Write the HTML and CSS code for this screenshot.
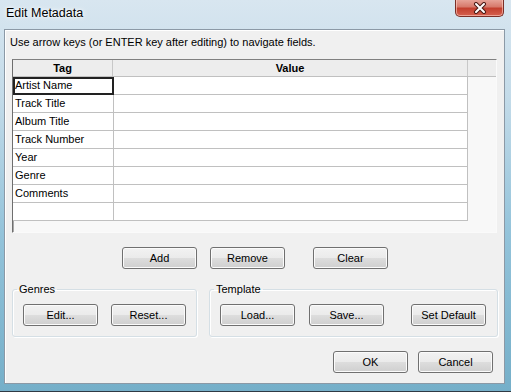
FILE: index.html
```html
<!DOCTYPE html>
<html lang="en">
<head>
    <meta charset="UTF-8">
    <title>Edit Metadata</title>
    <link rel="stylesheet" href="styles.css">
</head>
<body>
    <div class="window">
        <!-- title bar -->
        <div class="titlebar">
            <span class="title">Edit Metadata</span>
            <button class="close" aria-label="Close">
                <svg width="16" height="12" viewBox="0 0 16 12">
                    <path d="M4 2 L12 10 M12 2 L4 10" stroke="#4a1a14" stroke-width="4" stroke-linecap="round"/>
                    <path d="M4 2 L12 10 M12 2 L4 10" stroke="#ffffff" stroke-width="2" stroke-linecap="round"/>
                </svg>
            </button>
        </div>

        <div class="client">
            <p class="hint">Use arrow keys (or ENTER key after editing) to navigate fields.</p>

            <!-- tag table -->
            <div class="pane">
                <div class="thead">
                    <div class="th col-tag">Tag</div>
                    <div class="th col-value">Value</div>
                    <div class="th filler"></div>
                </div>
                <table class="grid">
                    <tr><td class="col-tag focus">Artist Name</td><td class="col-value"></td></tr>
                    <tr><td class="col-tag">Track Title</td><td class="col-value"></td></tr>
                    <tr><td class="col-tag">Album Title</td><td class="col-value"></td></tr>
                    <tr><td class="col-tag">Track Number</td><td class="col-value"></td></tr>
                    <tr><td class="col-tag">Year</td><td class="col-value"></td></tr>
                    <tr><td class="col-tag">Genre</td><td class="col-value"></td></tr>
                    <tr><td class="col-tag">Comments</td><td class="col-value"></td></tr>
                    <tr><td class="col-tag"></td><td class="col-value"></td></tr>
                </table>
            </div>

            <div class="row-actions">
                <button class="btn">Add</button>
                <button class="btn">Remove</button>
                <button class="btn btn-clear">Clear</button>
            </div>

            <div class="groups">
                <fieldset class="group genres">
                    <legend>Genres</legend>
                    <button class="btn">Edit...</button>
                    <button class="btn">Reset...</button>
                </fieldset>
                <fieldset class="group template">
                    <legend>Template</legend>
                    <button class="btn">Load...</button>
                    <button class="btn">Save...</button>
                    <button class="btn btn-default">Set Default</button>
                </fieldset>
            </div>

            <div class="row-dialog">
                <button class="btn">OK</button>
                <button class="btn">Cancel</button>
            </div>
        </div>
    </div>
</body>
</html>
```

FILE: styles.css
```css
html, body {
    margin: 0;
    padding: 0;
}
body {
    width: 511px;
    height: 392px;
    overflow: hidden;
    background: #2f3a44;
    font-family: "Liberation Sans", Arial, sans-serif;
    font-size: 11px;
    color: #000;
}
.window {
    width: 511px;
    height: 391px;
    background: linear-gradient(to bottom, #d8e6f0 0%, #c3dbe9 25%, #93c3da 60%, #75afc9 100%);
}
.titlebar {
    height: 29px;
    display: flex;
    align-items: flex-start;
    justify-content: space-between;
}
.title {
    font-size: 12.5px;
    margin: 6px 0 0 6px;
    text-shadow: 0 0 6px #fff, 0 0 3px #fff;
}
.close {
    width: 49px;
    height: 18px;
    margin: -1px 7px 0 0;
    padding: 0;
    border: 1px solid #7b2f27;
    border-top: none;
    border-radius: 0 0 5px 5px;
    background: linear-gradient(to bottom, #e9a99e 0%, #d77a6c 45%, #c3402f 55%, #d5604f 100%);
    box-shadow: inset 0 0 0 1px rgba(255, 210, 200, 0.6);
    display: flex;
    align-items: center;
    justify-content: center;
}
.client {
    margin: 0 6px 0 4px;
    height: 353px;
    background: #f0f0f0;
    border: 1px solid #8b99a6;
    box-shadow: inset 1px 1px 0 #fff;
    display: flex;
    flex-direction: column;
}
.hint {
    margin: 5px 0 0 5px;
    line-height: 14px;
    height: 14px;
}
.pane {
    margin: 10px 0 0 7px;
    width: 483px;
    height: 172px;
    background: #f8f8f8;
    border: 1px solid;
    border-color: #808080 #fafafa #fafafa #6e6e6e;
    box-shadow: inset 1px 0 0 #a8a8a8;
}
.thead {
    display: flex;
    height: 16px;
    background: #ededed;
    border-bottom: 1px solid #c0c0c0;
}
.th {
    font-weight: bold;
    text-align: center;
    line-height: 16px;
    border-right: 1px solid #c8c8c8;
    box-sizing: border-box;
}
.th.col-tag {
    width: 100px;
}
.th.col-value {
    width: 355px;
}
.th.filler {
    flex: 1;
    border-right: none;
}
.grid {
    border-collapse: collapse;
    width: 455px;
    table-layout: fixed;
    background: #fff;
}
.grid td {
    height: 17px;
    padding: 0 0 0 2px;
    border-right: 1px solid #c0c0c0;
    border-bottom: 1px solid #c0c0c0;
    line-height: 17px;
    white-space: nowrap;
}
.grid td.col-tag {
    width: 98px;
}
.grid td.focus {
    outline: 2px solid #222;
    outline-offset: -2px;
}
.btn {
    width: 75px;
    height: 22px;
    padding: 0;
    font-family: inherit;
    font-size: 11px;
    color: #000;
    border: 1px solid #707070;
    border-radius: 3px;
    background: linear-gradient(to bottom, #f2f2f2 0%, #ebebeb 48%, #dddddd 52%, #cfcfcf 100%);
    box-shadow: inset 0 0 0 1px #fbfbfb;
}
.row-actions {
    display: flex;
    gap: 13px;
    margin: 14px 0 0 117px;
}
.row-actions .btn-clear {
    margin-left: 15px;
}
.groups {
    display: flex;
    gap: 12px;
    margin: 14px 0 0 7px;
}
.group {
    margin: 0;
    padding: 8px 10px 10px 10px;
    border: 1px solid #d5dfe5;
    border-radius: 3px;
    box-shadow: inset 1px 1px 0 #fff, 1px 1px 0 #fff;
    display: flex;
    gap: 13px;
}
.group legend {
    padding: 0 2px;
    margin-left: -6px;
    line-height: 13px;
}
.genres {
    width: 163px;
}
.template {
    width: 266px;
}
.template .btn {
    margin-right: 1px;
}
.template .btn-default {
    margin-left: 13px;
}
.row-dialog {
    display: flex;
    justify-content: flex-end;
    gap: 10px;
    margin: 14px 11px 0 0;
}
```
